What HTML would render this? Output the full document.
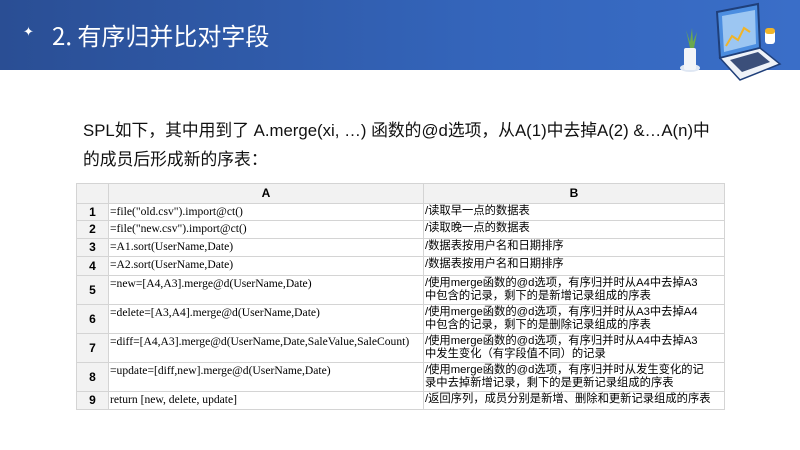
<!DOCTYPE html>
<html><head><meta charset="utf-8"><style>
*{margin:0;padding:0;box-sizing:border-box}
body{width:800px;height:450px;background:#fff;position:relative;overflow:hidden;font-family:"Liberation Sans","Noto Sans CJK SC",sans-serif}
.hdr{position:absolute;left:0;top:0;width:800px;height:70px;background:linear-gradient(90deg,#2a4e94 0%,#3465bb 60%,#3a6ec8 100%)}
.ttl{position:absolute;left:52px;top:17px;color:#fff;font-size:24px;font-family:"Noto Sans CJK SC",sans-serif}
.star{position:absolute;left:23px;top:24px;color:#fff;font-size:13px}
.p{position:absolute;left:83px;top:116px;font-size:16.8px;color:#111;line-height:29px}
table{position:absolute;left:76px;top:183px;border-collapse:collapse;table-layout:fixed;width:648px}
td{border:1px solid #d4d4d4;font-size:11.3px;vertical-align:top;padding:1px 1px;line-height:13px;overflow:hidden;white-space:nowrap}
td.n{background:#f2f2f2;text-align:center;font-weight:bold;font-size:12px;vertical-align:middle;font-family:"Liberation Sans",sans-serif}
td.a{font-family:"Liberation Serif","Noto Serif CJK SC",serif;font-size:11.6px}
td.b{font-family:"Liberation Sans","Noto Sans CJK SC",sans-serif}
tr.h td{background:#f2f2f2;text-align:center;font-weight:bold;font-size:12px;height:20px;vertical-align:middle}
</style></head><body>
<div class="hdr"></div>
<div class="star">✦</div>
<div class="ttl">2. 有序归并比对字段</div>
<svg style="position:absolute;left:670px;top:2px" width="120" height="80" viewBox="0 0 120 80">
<ellipse cx="20" cy="66" rx="10" ry="4" fill="#dfe7f3"/>
<rect x="14" y="46" width="12" height="22" rx="2" fill="#f2f4f8"/>
<path d="M20 46 L16 28 L20 40 L22 26 L23 40 L27 30 L24 46Z" fill="#6aa84f"/>
<polygon points="47,10 88,2 90,46 50,56" fill="#4b8de0" stroke="#1f3f7a" stroke-width="2"/>
<polygon points="52,14 85,8 86,42 54,50" fill="#9cc6f2"/>
<polyline points="56,44 62,34 68,38 74,26 80,30" fill="none" stroke="#f0b429" stroke-width="2"/>
<polygon points="50,56 90,46 110,62 70,78" fill="#eef2f8" stroke="#1f3f7a" stroke-width="1.5"/>
<polygon points="60,58 88,50 100,60 72,70" fill="#3b4f7a"/>
<rect x="95" y="28" width="10" height="14" rx="3" fill="#fff"/>
<rect x="95" y="26" width="10" height="6" rx="3" fill="#f0b429"/>
</svg>
<div class="p">SPL如下，其中用到了 A.merge(xi, …) 函数的@d选项，从A(1)中去掉A(2) &amp;…A(n)中<br>的成员后形成新的序表：</div>
<table>
<colgroup><col style="width:32px"><col style="width:315px"><col style="width:301px"></colgroup>
<tr class="h"><td></td><td>A</td><td>B</td></tr>
<tr style="height:17px"><td class="n">1</td><td class="a">=file("old.csv").import@ct()</td><td class="b">/读取早一点的数据表</td></tr>
<tr style="height:18px"><td class="n">2</td><td class="a">=file("new.csv").import@ct()</td><td class="b">/读取晚一点的数据表</td></tr>
<tr style="height:18px"><td class="n">3</td><td class="a">=A1.sort(UserName,Date)</td><td class="b">/数据表按用户名和日期排序</td></tr>
<tr style="height:19px"><td class="n">4</td><td class="a">=A2.sort(UserName,Date)</td><td class="b">/数据表按用户名和日期排序</td></tr>
<tr style="height:29px"><td class="n">5</td><td class="a">=new=[A4,A3].merge@d(UserName,Date)</td><td class="b">/使用merge函数的@d选项，有序归并时从A4中去掉A3<br>中包含的记录，剩下的是新增记录组成的序表</td></tr>
<tr style="height:29px"><td class="n">6</td><td class="a">=delete=[A3,A4].merge@d(UserName,Date)</td><td class="b">/使用merge函数的@d选项，有序归并时从A3中去掉A4<br>中包含的记录，剩下的是删除记录组成的序表</td></tr>
<tr style="height:29px"><td class="n">7</td><td class="a">=diff=[A4,A3].merge@d(UserName,Date,SaleValue,SaleCount)</td><td class="b">/使用merge函数的@d选项，有序归并时从A4中去掉A3<br>中发生变化（有字段值不同）的记录</td></tr>
<tr style="height:29px"><td class="n">8</td><td class="a">=update=[diff,new].merge@d(UserName,Date)</td><td class="b">/使用merge函数的@d选项，有序归并时从发生变化的记<br>录中去掉新增记录，剩下的是更新记录组成的序表</td></tr>
<tr style="height:18px"><td class="n">9</td><td class="a">return [new, delete, update]</td><td class="b">/返回序列，成员分别是新增、删除和更新记录组成的序表</td></tr>
</table>
</body></html>
